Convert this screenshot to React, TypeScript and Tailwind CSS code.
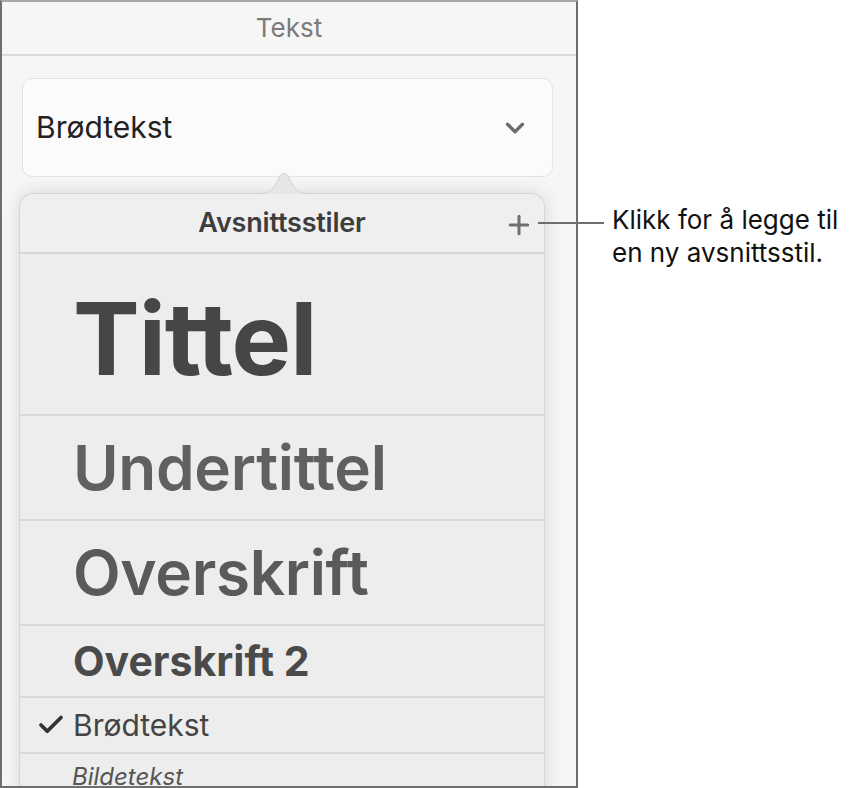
import { Check, ChevronDown, Plus } from "lucide-react";

const font = { fontFamily: "Inter, 'Noto Sans', sans-serif" };

const styles = [
  { label: "Tittel", row: "h-[162px] pt-[10px]", text: "text-[100px] font-bold text-[#464646] tracking-[-1px]" },
  { label: "Undertittel", row: "h-[105px]", text: "text-[62px] font-semibold text-[#606060] tracking-[-0.3px]" },
  { label: "Overskrift", row: "h-[105px]", text: "text-[62px] font-semibold text-[#5a5a5a] tracking-[-0.3px]" },
  { label: "Overskrift 2", row: "h-[72px]", text: "text-[41px] font-bold text-[#4a4a4a]" },
];

export default function App() {
  return (
    <div className="relative flex h-[788px] w-[857px] bg-white" style={font}>
      <div className="flex h-[788px] w-[578px] flex-col overflow-hidden border-x-2 border-b-2 border-t-2 border-x-[#6e6e6e] border-b-[#6e6e6e] border-t-[#a8a8a8] bg-[#f6f6f6]">
        <div className="flex h-[54px] shrink-0 items-center justify-center border-b-2 border-[#dadada] pb-[2px]">
          <span className="text-[26px] text-[#7b7b7b]">Tekst</span>
        </div>

        <div className="ml-[20px] mt-[22px] flex h-[99px] w-[531px] shrink-0 items-center justify-between rounded-[10px] border border-[#e3e3e3] bg-[#fbfbfb] pl-[13px] pr-[22px]">
          <span className="text-[30px] text-[#222]">Brødtekst</span>
          <ChevronDown className="h-[30px] w-[30px] text-[#6b6b6b]" strokeWidth={2.6} />
        </div>

        <div className="relative ml-[17px] mt-[16px] w-[526px] shrink-0 rounded-t-[14px] border border-b-0 border-[#d5d5d5] bg-[#ededed] shadow-[0_0_18px_rgba(0,0,0,0.13)]">
          <svg
            className="absolute left-[234px] top-[-28px]"
            width="60"
            height="29"
            viewBox="0 0 60 29"
          >
            <path
              d="M0 29 C13 29 18 27 24 14 Q30 1 36 14 C42 27 47 29 60 29 Z"
              fill="#e6e6e6"
            />
            <path
              d="M0 28.5 C13 28.5 18 26.5 24 13.5 Q30 0.5 36 13.5 C42 26.5 47 28.5 60 28.5"
              fill="none"
              stroke="#d2d2d2"
              strokeWidth="1"
            />
          </svg>

          <div className="relative flex h-[60px] items-center justify-center rounded-t-[14px] border-b-2 border-[#d6d6d6] bg-[#efefef]">
            <span className="text-[27px] font-semibold tracking-[-0.2px] text-[#3d3d3d]">Avsnittsstiler</span>
            <Plus className="absolute right-[10px] top-[16px] h-[30px] w-[30px] text-[#6f6f6f]" strokeWidth={2.4} />
          </div>

          {styles.map((s) => (
            <div key={s.label} className={`flex items-center border-b-2 border-[#d8d8d8] pl-[53px] ${s.row}`}>
              <span className={`leading-none ${s.text}`}>{s.label}</span>
            </div>
          ))}

          <div className="flex h-[56px] items-center border-b-2 border-[#d8d8d8] pl-[16px]">
            <Check className="mr-[7px] h-[30px] w-[30px] text-[#333]" strokeWidth={3} />
            <span className="text-[30px] text-[#444]">Brødtekst</span>
          </div>

          <div className="flex h-[40px] items-start pl-[52px] pt-[5px]">
            <span className="text-[24px] italic text-[#555]">Bildetekst</span>
          </div>
        </div>
      </div>

      <div className="absolute left-[538px] top-[222px] h-[2px] w-[66px] bg-[#6e6e6e]" />
      <div className="absolute left-[612px] top-[203px] text-[26px] leading-[33px] text-[#111]">
        <p>Klikk for å legge til</p>
        <p>en ny avsnittsstil.</p>
      </div>
    </div>
  );
}
